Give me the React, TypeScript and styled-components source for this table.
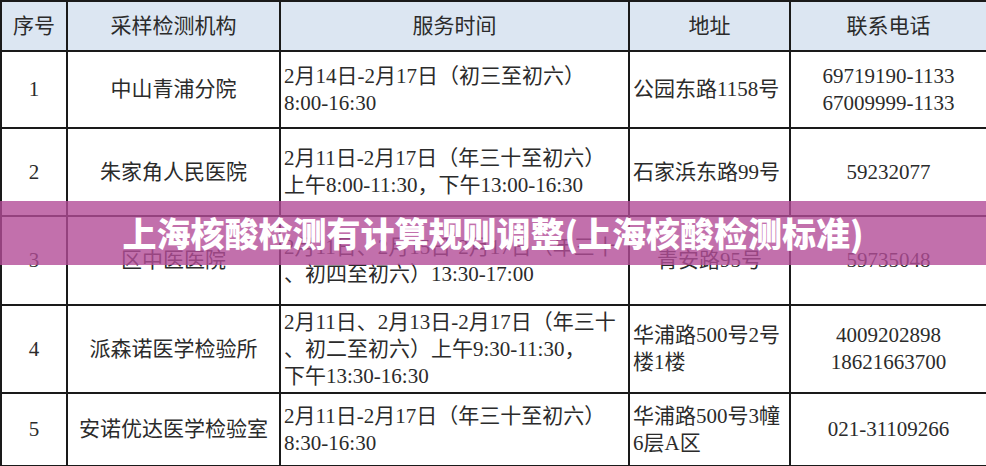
import React from 'react';
import styled, { createGlobalStyle } from 'styled-components';

const GlobalStyle = createGlobalStyle`
  html, body {
    margin: 0;
    padding: 0;
    background: #fff;
  }
`;

const Page = styled.div`
  position: relative;
  width: 986px;
  height: 466px;
  overflow: hidden;
  background: #fff;
`;

const Table = styled.table`
  width: 986px;
  border-collapse: collapse;
  table-layout: fixed;
  color: #2b2b2b;
  font-family: 'Liberation Serif', 'Noto Sans CJK SC', serif;
  font-size: 21px;
  line-height: 27px;
`;

const HeadRow = styled.tr`
  height: 50px;
  background: #dce6f2;
`;

const Row = styled.tr<{ $h: number }>`
  height: ${(p) => p.$h}px;
`;

const Th = styled.th`
  border: 2px solid #1a1a1a;
  padding: 0;
  font-weight: normal;
  text-align: center;
  vertical-align: middle;
`;

const Td = styled.td<{ $align?: 'left' | 'center' }>`
  border: 2px solid #1a1a1a;
  padding: 0 3px;
  text-align: ${(p) => p.$align || 'center'};
  vertical-align: middle;
  white-space: nowrap;
  overflow: hidden;
`;

const Banner = styled.div`
  position: absolute;
  left: 0;
  right: 0;
  top: 201px;
  height: 64px;
  display: flex;
  align-items: center;
  justify-content: center;
  background: rgba(179, 76, 151, 0.8);
`;

const BannerTitle = styled.h1`
  margin: 0;
  color: #fff;
  font-family: 'Noto Sans CJK SC', 'Noto Sans', sans-serif;
  font-size: 34px;
  font-weight: 900;
  line-height: 1;
  white-space: nowrap;
`;

type Item = {
  no: string;
  org: string;
  time: string[];
  addr: string[];
  addrAlign: 'left' | 'center';
  phone: string[];
  h: number;
};

const rows: Item[] = [
  {
    no: '1',
    org: '中山青浦分院',
    time: ['2月14日-2月17日（初三至初六）', '8:00-16:30'],
    addr: ['公园东路1158号'],
    addrAlign: 'left',
    phone: ['69719190-1133', '67009999-1133'],
    h: 77,
  },
  {
    no: '2',
    org: '朱家角人民医院',
    time: ['2月11日-2月17日（年三十至初六）', '上午8:00-11:30，下午13:00-16:30'],
    addr: ['石家浜东路99号'],
    addrAlign: 'left',
    phone: ['59232077'],
    h: 88,
  },
  {
    no: '3',
    org: '区中医医院',
    time: ['2月11日、2月15日-2月17日（年三十', '、初四至初六）13:30-17:00'],
    addr: ['青安路95号'],
    addrAlign: 'center',
    phone: ['59735048'],
    h: 89,
  },
  {
    no: '4',
    org: '派森诺医学检验所',
    time: ['2月11日、2月13日-2月17日（年三十', '、初二至初六）上午9:30-11:30，', '下午13:30-16:30'],
    addr: ['华浦路500号2号', '楼1楼'],
    addrAlign: 'left',
    phone: ['4009202898', '18621663700'],
    h: 88,
  },
  {
    no: '5',
    org: '安诺优达医学检验室',
    time: ['2月11日-2月17日（年三十至初六）', '8:30-16:30'],
    addr: ['华浦路500号3幢', '6层A区'],
    addrAlign: 'left',
    phone: ['021-31109266'],
    h: 73,
  },
];

function Lines({ items }: { items: string[] }) {
  return (
    <>
      {items.map((t, i) => (
        <React.Fragment key={i}>
          {i > 0 && <br />}
          {t}
        </React.Fragment>
      ))}
    </>
  );
}

export default function App() {
  return (
    <Page>
      <GlobalStyle />
      <Table>
        <colgroup>
          <col style={{ width: 66 }} />
          <col style={{ width: 213 }} />
          <col style={{ width: 349 }} />
          <col style={{ width: 161 }} />
          <col style={{ width: 197 }} />
        </colgroup>
        <thead>
          <HeadRow>
            <Th>序号</Th>
            <Th>采样检测机构</Th>
            <Th>服务时间</Th>
            <Th>地址</Th>
            <Th>联系电话</Th>
          </HeadRow>
        </thead>
        <tbody>
          {rows.map((r) => (
            <Row key={r.no} $h={r.h}>
              <Td>{r.no}</Td>
              <Td>{r.org}</Td>
              <Td $align='left'>
                <Lines items={r.time} />
              </Td>
              <Td $align={r.addrAlign}>
                <Lines items={r.addr} />
              </Td>
              <Td>
                <Lines items={r.phone} />
              </Td>
            </Row>
          ))}
        </tbody>
      </Table>
      <Banner>
        <BannerTitle>上海核酸检测有计算规则调整(上海核酸检测标准)</BannerTitle>
      </Banner>
    </Page>
  );
}
